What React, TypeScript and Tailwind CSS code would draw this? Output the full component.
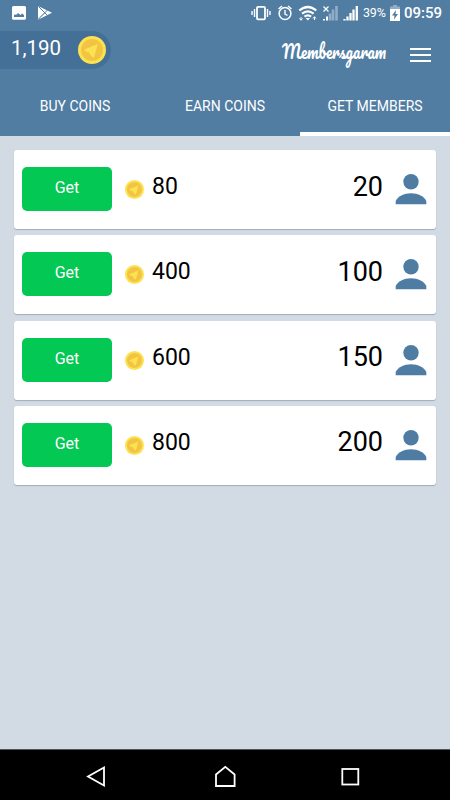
import { useState } from "react";

const offers = [
    { coins: 80, members: 20 },
    { coins: 400, members: 100 },
    { coins: 600, members: 150 },
    { coins: 800, members: 200 },
];

const tabs = ["BUY COINS", "EARN COINS", "GET MEMBERS"];

const Coin = ({ className }: { className: string }) => (
    <svg viewBox="0 0 28 28" className={className}>
        <circle cx="14" cy="14" r="14" fill="#fbe251" />
        <circle cx="14" cy="14" r="11" fill="#f3c443" />
        <path d="M19.800 8 6.300 13.500Q6.500 15.700 11 16.300 13.500 21.500 16 21.500z" fill="#fbe251" />
    </svg>
);

const Person = () => (
    <svg viewBox="0 0 32 32" className="mb-[1px] h-8 w-8" fill="#4f7ca3">
        <circle cx="16" cy="8.800" r="7.700" />
        <path d="M.7 31.300v-3.300C2.500 23.500 9 20.200 16 20.200s13.500 3.300 15.300 7.800v3.300z" />
    </svg>
);

const StatusBar = () => (
    <div className="flex h-[26px] items-center text-white">
        <svg viewBox="0 0 60 26" className="h-[26px] w-[60px]" fill="#fff">
            <path
                fillRule="evenodd"
                d="M13.500 6h11q1.500 0 1.500 1.500v10.800q0 1.500-1.500 1.500h-11q-1.500 0-1.500-1.500V7.500Q12 6 13.500 6zM14 17h10v-2l-2-1.500-1.500 1.500-2.500-2-2 2-1-.7-1 1z"
            />
            <path d="M38 6v13.500l6.500-6.800z" />
            <path d="M38 6l14 6.800-14 6.900 7-6.900z" />
            <path d="M38.500 6.500 48 16M38.500 19 48 9.500" stroke="#4f7ca3" strokeWidth="1" />
        </svg>
        <svg viewBox="250 0 110 26" className="ml-[190px] h-[26px] w-[110px]" fill="none" stroke="#fff">
            {/* vibrate */}
            <rect x="257" y="6.800" width="8" height="12.500" rx="1" strokeWidth="1.800" />
            <path d="M254.500 9v8M252 11v4M267.500 9v8M270 11v4" strokeWidth="1.400" />
            {/* alarm */}
            <circle cx="285" cy="13.500" r="5.900" strokeWidth="1.500" />
            <path d="M285 10v4l2.500 1.500M278.500 9l3.500-3M288 6l3.500 3" strokeWidth="1.400" />
            {/* wifi */}
            <path d="M299.300 10.500q8.500-7 17 0M302 13.700q5.800-4.700 11.600 0M304.500 16.700q3.300-2.700 6.600 0" strokeWidth="2.200" />
            <path d="M305.600 18h4.400l-2.200 2.600z" fill="#fff" stroke="none" />
            <path d="M301 17v3M299.500 18.500l1.500 1.800 1.500-1.800M314.500 20v-3M313 18.500l1.500-1.800 1.500 1.800" strokeWidth="1" />
            {/* sim 1 without service */}
            <path d="M323.500 6.500l5 5M328.500 6.500l-5 5" strokeWidth="1.200" />
            <path d="M324 20.500v-1.500M327 20.500v-4" strokeWidth="2" />
            <path d="M330 20.500v-7M333 20.500v-11M336.500 20.500V6" stroke="#91aec6" strokeWidth="2.600" />
            {/* sim 2 */}
            <path d="M344.500 20.500v-1.500M347.500 20.500v-4M350.500 20.500v-7.500M353.500 20.500v-11M356.800 20.500V6" strokeWidth="2.300" />
        </svg>
        <span className="ml-[3px] w-[27px] text-[12.500px] tracking-[-0.200px]">39%</span>
        <svg viewBox="0 0 10 16" className="h-4 w-[10px]">
            <path d="M3 0h4v1.500h3V6H0V1.500h3z" fill="#91aec6" />
            <path d="M0 4h10v12H0z" fill="#fff" />
            <path d="M6 5 2 10.500h2.500L4 14.500 8 9H5.500z" fill="#4f7ca3" />
        </svg>
        <span className="ml-[4px] text-[15px] font-medium">09:59</span>
    </div>
);

const App = () => {
    const [activeTab, setActiveTab] = useState(2);

    return (
        <div className="flex h-[800px] w-[450px] flex-col overflow-hidden bg-[#d2dae3] font-['Roboto',sans-serif]">
            <header className="h-[136px] shrink-0 bg-[#517da2]">
                <StatusBar />

                {/* Toolbar */}
                <div className="flex h-[50px] items-start pt-[5px]">
                    <div className="flex h-[38px] w-[111px] items-center justify-between rounded-r-full bg-[#446f96] pr-[5px] pl-[11px]">
                        <span className="-mt-[5px] text-[20.500px] leading-6 text-white">1,190</span>
                        <Coin className="h-7 w-7" />
                    </div>
                    <svg viewBox="0 0 108 49" className="ml-[170px] h-[49px] w-[108px] overflow-visible">
                        <text
                            x="1"
                            y="28"
                            fill="#fff"
                            fontSize="19"
                            fontFamily="'Brush Script MT', Pacifico, Lato, cursive"
                            textLength="104"
                            lengthAdjust="spacingAndGlyphs"
                        >
                            Membersgaram
                        </text>
                    </svg>
                    <button className="mt-[17px] ml-[21px] flex w-[21px] flex-col gap-[4px]">
                        <span className="h-[2px] w-full bg-white" />
                        <span className="h-[2px] w-full bg-white" />
                        <span className="h-[2px] w-full bg-white" />
                    </button>
                </div>

                {/* Tabs */}
                <nav className="grid h-[60px] grid-cols-3">
                    {tabs.map((tab, index) => (
                        <button
                            key={tab}
                            onClick={() => setActiveTab(index)}
                            className={`border-b-4 pt-1 text-sm text-white ${
                                activeTab === index ? "border-white" : "border-transparent"
                            }`}
                        >
                            {tab}
                        </button>
                    ))}
                </nav>
            </header>

            <main className="flex flex-1 flex-col gap-[6.300px] px-[14px] pt-[14px]">
                {offers.map((offer) => (
                    <div
                        key={offer.coins}
                        className="flex h-[79px] items-center rounded-[3px] bg-white pr-[9px] pl-2 shadow-[0_1px_1px_#9dadbd]"
                    >
                        <button className="mb-[1px] h-[44px] w-[90px] rounded-[5px] bg-[#03c853] pb-[2px] text-base text-white">
                            Get
                        </button>
                        <Coin className="ml-[13px] h-[19px] w-[19px]" />
                        <span className="mb-[5px] ml-[8px] text-[23px] leading-7 text-black">{offer.coins}</span>
                        <span className="mr-[12px] mb-[6px] ml-auto text-[27px] leading-8 text-black">
                            {offer.members}
                        </span>
                        <Person />
                    </div>
                ))}
            </main>

            {/* Navigation bar */}
            <footer className="h-[51px] shrink-0 border-t border-[#50545a] bg-black">
                <svg viewBox="0 749 450 50" className="h-[50px] w-[450px]" fill="none" stroke="#fff" strokeWidth="1.800">
                    <path d="M104 766.500v18l-16-9z" />
                    <path d="M216 785v-11.500l9.300-7.700 9.300 7.700v11.500z" />
                    <rect x="342.300" y="768" width="16" height="15.500" />
                </svg>
            </footer>
        </div>
    );
};

export default App;
